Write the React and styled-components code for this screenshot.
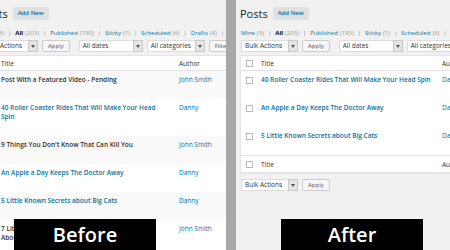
import styled, { createGlobalStyle } from 'styled-components';

const GlobalStyle = createGlobalStyle`
  body {
    margin: 0;
    background: #f1f1f1;
    font-family: "Open Sans", "Liberation Sans", sans-serif;
    color: #444;
  }
`;

const statuses = [
  { name: 'Mine', count: 3 },
  { name: 'All', count: 203, current: true },
  { name: 'Published', count: 190 },
  { name: 'Sticky', count: 1 },
  { name: 'Scheduled', count: 6 },
  { name: 'Drafts', count: 4 },
  { name: 'Pending', count: 2 },
];

const beforeRows = [
  { title: 'Post With a Featured Video - Pending', author: 'John Smith', link: false },
  { title: '40 Roller Coaster Rides That Will Make Your Head Spin', author: 'Danny', link: true },
  { title: "9 Things You Don't Know That Can Kill You", author: 'John Smith', link: false },
  { title: 'An Apple a Day Keeps The Doctor Away', author: 'Danny', link: true },
  { title: '5 Little Known Secrets about Big Cats', author: 'Danny', link: true },
  { title: '7 Little Known Things You Probably Never Knew About Snow Leopards', author: 'John Smith', link: false },
];

const afterRows = [
  { title: '40 Roller Coaster Rides That Will Make Your Head Spin', author: 'Danny', link: true },
  { title: 'An Apple a Day Keeps The Doctor Away', author: 'Danny', link: true },
  { title: '5 Little Known Secrets about Big Cats', author: 'Danny', link: true },
];

function Select({ label, width }) {
  return (
    <SelectBox $width={width}>
      <span>{label}</span>
      <SelectArrow>
        <svg width="4" height="3" viewBox="0 0 4 3">
          <path d="M0 0 L4 0 L2 3 Z" fill="#555" />
        </svg>
      </SelectArrow>
    </SelectBox>
  );
}

function PostsScreen({ shift, rows, titleWidth, titlePad, striped, withFooter, label, labelLeft }) {
  return (
    <Panel>
      <Content $shift={shift}>
        <Heading>
          <h2>Posts</h2>
          <AddNew type="button">Add New</AddNew>
        </Heading>

        <StatusList>
          {statuses.map((s, i) => (
            <li key={s.name}>
              <StatusLink $current={s.current}>{s.name}</StatusLink>
              <Count>({s.count})</Count>
              {i < statuses.length - 1 && <Sep>|</Sep>}
            </li>
          ))}
        </StatusList>

        <Filters>
          <Select label="Bulk Actions" width={57} />
          <Button type="button">Apply</Button>
          <Spacer />
          <Select label="All dates" width={64} />
          <Select label="All categories" width={58} />
          <Button type="button">Filter</Button>
        </Filters>

        <Table>
          <HeadRow>
            <CheckCell><Check /></CheckCell>
            <TitleCell $width={titleWidth} $pad={titlePad}>Title</TitleCell>
            <AuthorCell>Author</AuthorCell>
          </HeadRow>
          {rows.map((r, i) => (
            <Row key={r.title} $alt={striped && i % 2 === 0}>
              <CheckCell><Check /></CheckCell>
              <TitleCell $width={titleWidth} $pad={titlePad}>
                <PostTitle $link={r.link}>{r.title}</PostTitle>
                <RowActions>Edit | Quick Edit | Trash | View</RowActions>
              </TitleCell>
              <AuthorCell>
                <AuthorLink>{r.author}</AuthorLink>
              </AuthorCell>
            </Row>
          ))}
          {withFooter && (
            <FootRow>
              <CheckCell><Check /></CheckCell>
              <TitleCell $width={titleWidth} $pad={titlePad}>Title</TitleCell>
              <AuthorCell>Author</AuthorCell>
            </FootRow>
          )}
        </Table>

        {withFooter && (
          <BottomFilters>
            <Select label="Bulk Actions" width={57} />
            <Button type="button">Apply</Button>
          </BottomFilters>
        )}
      </Content>
      <Label $left={labelLeft}>{label}</Label>
    </Panel>
  );
}

export default function App() {
  return (
    <>
      <GlobalStyle />
      <Stage>
        <PostsScreen
          shift={-20}
          rows={beforeRows}
          titleWidth={178}
          titlePad={14}
          striped
          label="Before"
          labelLeft={14}
        />
        <Divider />
        <PostsScreen
          shift={4}
          rows={afterRows}
          titleWidth={181}
          titlePad={2}
          withFooter
          label="After"
          labelLeft={45}
        />
      </Stage>
    </>
  );
}

const Stage = styled.div`
  display: grid;
  grid-template-columns: 226px 10px 1fr;
  width: 450px;
  height: 250px;
  overflow: hidden;
`;

const Divider = styled.div`
  background: #a8a8a8;
`;

const Panel = styled.section`
  position: relative;
  overflow: hidden;
  background: #f1f1f1;
`;

const Content = styled.div`
  width: 470px;
  margin-left: ${(p) => p.$shift}px;
`;

const Heading = styled.div`
  display: flex;
  align-items: center;
  gap: 5px;
  height: 26px;

  h2 {
    margin: 0;
    font-size: 11px;
    font-weight: 400;
    color: #222;
  }
`;

const AddNew = styled.button`
  height: 13px;
  padding: 0 5px;
  border: none;
  border-radius: 2px;
  background: #e0e0e0;
  color: #0074a2;
  font-family: inherit;
  font-size: 6px;
  font-weight: 600;
`;

const StatusList = styled.ul`
  display: flex;
  margin: 0;
  padding: 0 0 0 1px;
  list-style: none;
  height: 14px;
  align-items: center;
  font-size: 6px;
  white-space: nowrap;
`;

const StatusLink = styled.span`
  color: ${(p) => (p.$current ? '#000' : '#0074a2')};
  font-weight: ${(p) => (p.$current ? 700 : 400)};
`;

const Count = styled.span`
  color: #999;
  margin-left: 2px;
`;

const Sep = styled.span`
  color: #888;
  margin: 0 4px;
`;

const Filters = styled.div`
  display: flex;
  align-items: center;
  gap: 4px;
  height: 12px;
  padding-left: 1px;
`;

const Spacer = styled.span`
  width: 1px;
`;

const SelectBox = styled.div`
  display: flex;
  align-items: stretch;
  width: ${(p) => p.$width}px;
  height: 12px;
  box-sizing: border-box;
  border: 1px solid #ddd;
  background: #fff;
  font-size: 6.5px;
  color: #333;

  span {
    flex: 1;
    padding-left: 3px;
    line-height: 10px;
    white-space: nowrap;
    overflow: hidden;
  }
`;

const SelectArrow = styled.i`
  display: flex;
  align-items: center;
  justify-content: center;
  width: 8px;
  margin: -1px -1px -1px 0;
  border: 1px solid #c8c8c8;
  background: #e4e4e4;
`;

const Button = styled.button`
  height: 12px;
  padding: 0 5px;
  box-sizing: border-box;
  border: 1px solid #ccc;
  border-radius: 2px;
  background: #f7f7f7;
  color: #555;
  font-family: inherit;
  font-size: 6px;
  line-height: 10px;
`;

const Table = styled.div`
  margin-top: 3px;
  background: #fff;
  border: 1px solid #e5e5e5;
  border-right: none;
  box-shadow: 0 1px 1px rgba(0, 0, 0, 0.04);
`;

const HeadRow = styled.div`
  display: flex;
  align-items: center;
  height: 14px;
  border-bottom: 1px solid #e1e1e1;
  font-size: 6.5px;
  color: #333;
`;

const FootRow = styled(HeadRow)`
  height: 16px;
  border-bottom: none;
  border-top: 1px solid #e1e1e1;
`;

const Row = styled.div`
  display: flex;
  align-items: flex-start;
  padding: 4px 0 6px;
  background: ${(p) => (p.$alt ? '#f9f9f9' : '#fff')};
  font-size: 6.5px;
  line-height: 9px;
`;

const CheckCell = styled.div`
  display: flex;
  justify-content: flex-start;
  width: 20px;
  padding-left: 5px;
  box-sizing: border-box;

  ${Row} & {
    padding-top: 2px;
  }
`;

const Check = styled.span`
  display: block;
  width: 7px;
  height: 7px;
  box-sizing: border-box;
  border: 1px solid #b4b9be;
  background: #fff;
`;

const TitleCell = styled.div`
  width: ${(p) => p.$width}px;
  flex-shrink: 0;
  padding-right: ${(p) => p.$pad}px;
  box-sizing: border-box;
`;

const PostTitle = styled.div`
  font-weight: 600;
  color: ${(p) => (p.$link ? '#0074a2' : '#333')};
`;

const RowActions = styled.div`
  visibility: hidden;
  font-size: 6px;
`;

const AuthorCell = styled.div`
  flex: 1;
`;

const AuthorLink = styled.span`
  color: #0074a2;
`;

const BottomFilters = styled(Filters)`
  margin-top: 6px;
`;

const Label = styled.div`
  position: absolute;
  left: ${(p) => p.$left}px;
  top: 219px;
  width: 142px;
  height: 40px;
  background: #000;
  color: #fff;
  font-size: 20px;
  font-weight: 600;
  text-align: center;
  line-height: 31px;
`;
